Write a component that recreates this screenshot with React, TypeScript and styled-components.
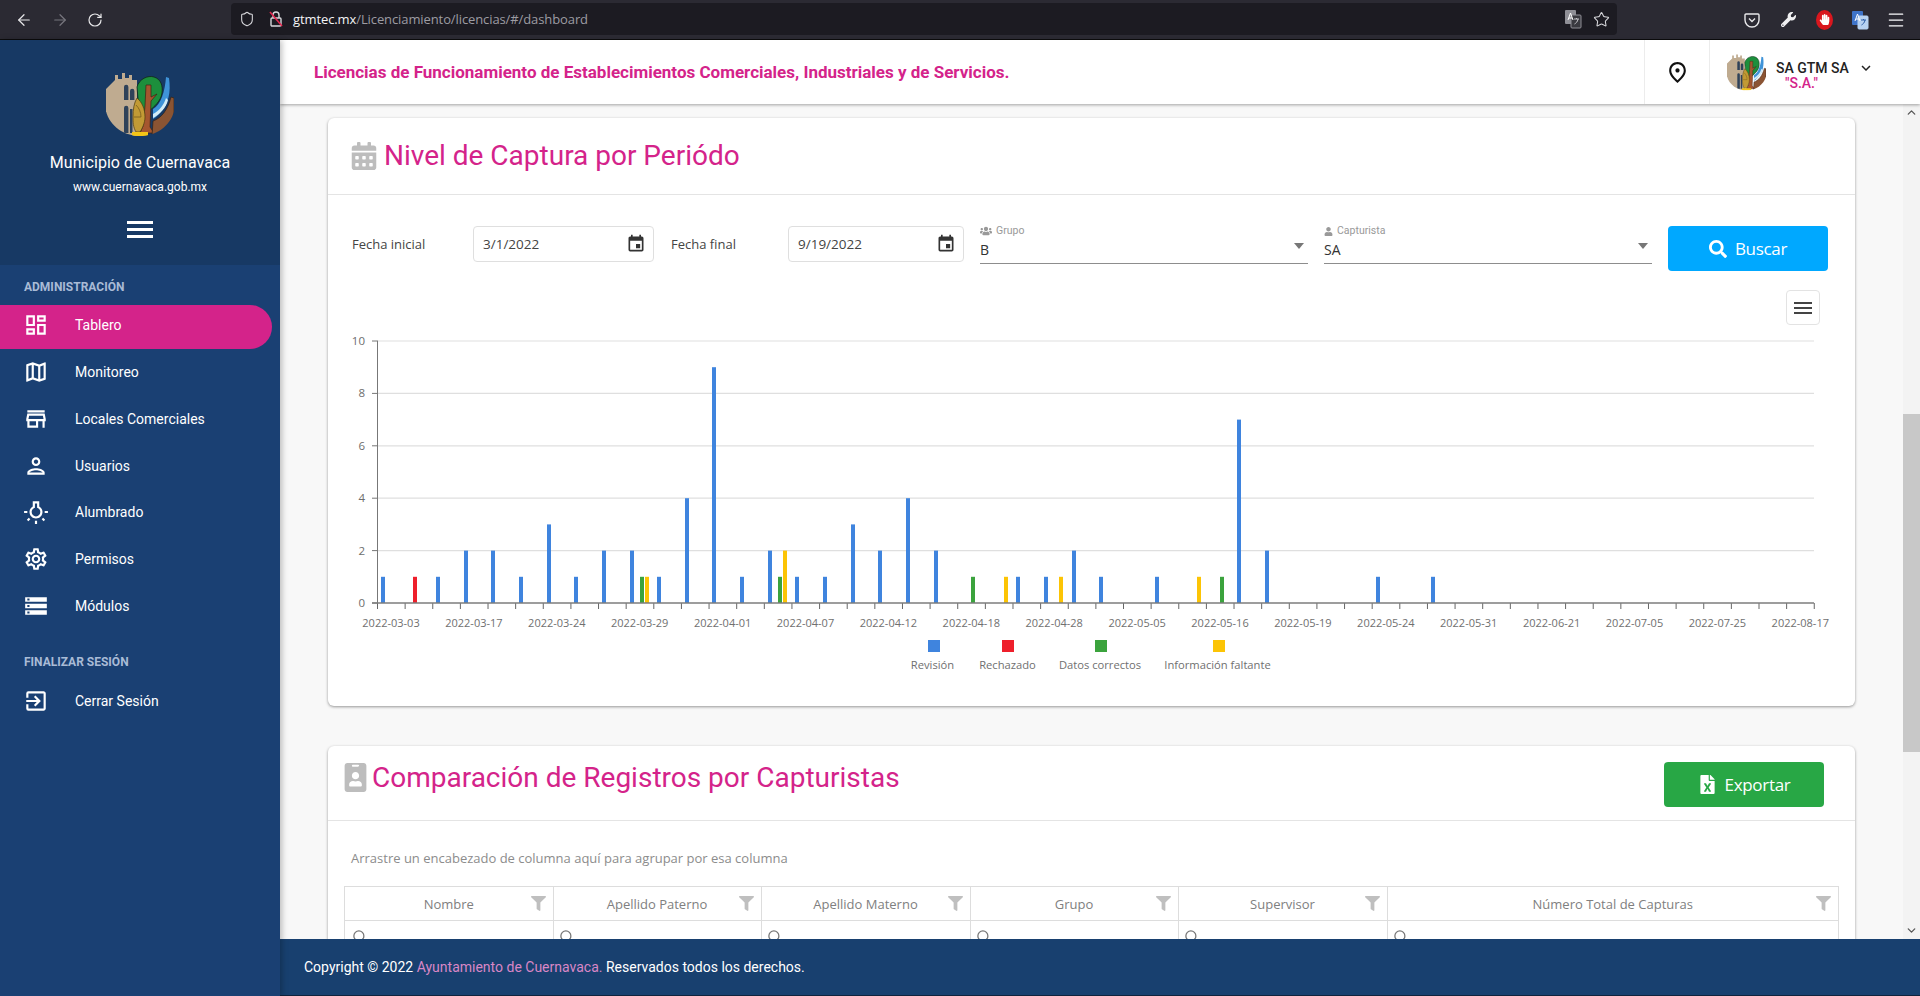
import React from 'react';
import styled, { createGlobalStyle } from 'styled-components';
import { ArrowLeft, ArrowRight, RotateCw, Shield, Star, Menu, Search, ChevronUp, ChevronDown } from 'lucide-react';
import {
  MdOutlineDashboard, MdOutlineMap, MdOutlineStore, MdOutlinePerson, MdOutlineWbIncandescent,
  MdOutlineSettings, MdStorage, MdOutlineExitToApp, MdOutlinePlace, MdKeyboardArrowDown, MdEvent, MdMenu,
} from 'react-icons/md';
import { FaCalendarAlt, FaIdBadge, FaFileExcel, FaSearch, FaUsers, FaUser, FaFilter, FaWrench, FaHandPaper } from 'react-icons/fa';

const PINK = '#d4238a';
const SEGOE = `'Open Sans', 'Noto Sans', sans-serif`;

const Global = createGlobalStyle`
  html, body { margin: 0; padding: 0; height: 996px; overflow: hidden; background: #f8f8f8; }
  body { font-family: Roboto, sans-serif; }
  #root { height: 996px; }
  * { box-sizing: border-box; }
`;

const Page = styled.div`display: flex; flex-direction: column; height: 996px; width: 1920px; overflow: hidden;`;

/* browser chrome */
const BrowserBar = styled.div`
  height: 40px; flex: none; background: #2b2a33; border-bottom: 1px solid #0c0c0d;
  display: flex; align-items: center; color: #fbfbfe;
`;
const NavGroup = styled.div`
  width: 231px; flex: none; display: flex; align-items: center; gap: 18px; padding-left: 15px;
`;
const NavIcon = styled.span<{ $dim?: boolean }>`
  display: flex; color: ${p => (p.$dim ? '#77767e' : '#e8e8ea')};
`;
const AddressBar = styled.div`
  width: 1386px; height: 32px; flex: none; background: #1c1b22; border-radius: 4px; margin-top: -1px;
  display: flex; align-items: center; padding: 0 5px 0 8px; color: #d8d8dc;
`;
const LockGlyph = styled.svg`margin-left: 12px; flex: none;`;
const Url = styled.div`
  font: 400 13px ${SEGOE}; color: #9d9ca3; margin-left: 8px; flex: 1; white-space: nowrap; letter-spacing: -0.1px;
  b { font-weight: 400; color: #f4f4f6; }
`;
const BarIcons = styled.div`display: flex; align-items: center; gap: 11px; margin-right: 2px;`;
const Extensions = styled.div`
  flex: 1; display: flex; align-items: center; justify-content: flex-end; padding-right: 6px;
`;
const ExtSlot = styled.span`width: 36px; flex: none; display: flex; align-items: center; justify-content: center;`;
const RedHand = styled.span`
  width: 17px; height: 20px; border-radius: 50%; background: #d9171e; color: #fff;
  display: flex; align-items: center; justify-content: center;
`;

/* application frame */
const AppBody = styled.div`flex: 1; display: flex; min-height: 0;`;
const Sidebar = styled.aside`
  width: 280px; flex: none; background: #1a4073; color: #fff; display: flex; flex-direction: column;
  box-shadow: 2px 0 6px rgba(0,0,0,.25); z-index: 3;
`;
const Brand = styled.div`
  height: 225px; flex: none; background: #173964; display: flex; flex-direction: column; align-items: center; padding-top: 33px;
`;
const BrandName = styled.div`font-size: 16px; line-height: 20px; margin-top: 17px; letter-spacing: .05px;`;
const BrandUrl = styled.div`font-size: 12px; line-height: 14px; margin-top: 7px;`;
const Burger = styled.div`
  width: 26px; height: 17px; margin-top: 27px;
  border-top: 3px solid #fff; border-bottom: 3px solid #fff; position: relative;
  &::after { content: ''; position: absolute; left: 0; right: 0; top: 4px; height: 3px; background: #fff; }
`;
const SectionTitle = styled.div<{ $top: number }>`
  font-size: 12px; font-weight: 700; line-height: 14px; color: #a9bbd6; padding-left: 24px; margin-top: ${p => p.$top}px;
`;
const NavList = styled.nav<{ $top: number }>`display: flex; flex-direction: column; margin-top: ${p => p.$top}px;`;
const NavRow = styled.a<{ $active?: boolean }>`
  height: 46.7px; width: 272px; display: flex; align-items: center; font-size: 14px; color: #fff;
  ${p => p.$active && `background: ${PINK}; height: 44px; padding-bottom: 4px; border-radius: 0 22px 22px 0;`}
`;
const NavGlyph = styled.span`width: 75px; padding-left: 23px; display: flex; flex: none;`;

const Main = styled.div`flex: 1; display: flex; flex-direction: column; min-width: 0;`;
const Header = styled.header`
  height: 64px; flex: none; background: #fff; display: flex; align-items: stretch;
  box-shadow: 0 1px 3px rgba(0,0,0,.35); z-index: 2;
`;
const HeaderTitle = styled.div`
  flex: 1; display: flex; align-items: center; padding-left: 34px;
  font-size: 17px; font-weight: 700; color: ${PINK};
`;
const PinCell = styled.div`
  width: 65px; flex: none; border-left: 1px solid #ececec; display: flex; align-items: center; justify-content: center; color: #111;
`;
const UserCell = styled.div`
  width: 211px; flex: none; border-left: 1px solid #ececec; display: flex; align-items: center; padding-left: 17px;
`;
const UserText = styled.div`margin-left: 10px; display: flex; flex-direction: column;`;
const UserName = styled.div`font-size: 14px; line-height: 16px; font-weight: 500; color: #222; display: flex; align-items: center; gap: 8px; white-space: nowrap; margin-top: 5px;`;
const UserRole = styled.div`font-size: 14px; line-height: 14px; font-weight: 500; color: ${PINK}; padding-left: 9px; margin-top: -1px;`;

const ScrollArea = styled.div`flex: 1; display: flex; min-height: 0; background: #f8f8f8;`;
const Content = styled.main`
  flex: 1; min-width: 0; overflow: hidden; padding: 14px 48px 0; display: flex; flex-direction: column; gap: 40px;
`;
const ScrollTrack = styled.div`
  width: 17px; flex: none; background: #f3f3f3; display: flex; flex-direction: column; align-items: center; color: #555;
`;
const ScrollArrow = styled.div<{ $gap: number }>`height: 17px; display: flex; align-items: center; margin-top: ${p => p.$gap}px;`;
const ScrollThumb = styled.div`width: 17px; height: 338px; background: #c8c8c8; margin-top: 293px;`;

const Card = styled.section<{ $height: number }>`
  height: ${p => p.$height}px; flex: none; background: #fff; border-radius: 6px;
  box-shadow: 0 1px 3px rgba(0,0,0,.4);
`;
const CardHead = styled.div<{ $h: number }>`
  height: ${p => p.$h}px; border-bottom: 1px solid #e4e4e4; display: flex; align-items: center;
`;
const CardIcon = styled.span<{ $l: number; $w: number }>`
  display: flex; color: #bdbdbd; margin-left: ${p => p.$l}px; width: ${p => p.$w}px; flex: none;
`;
const CardTitle = styled.h2`
  margin: 0; font-size: 28px; font-weight: 400; color: ${PINK}; line-height: 36px;
`;
const FilterRow = styled.div`
  display: flex; align-items: flex-start; padding: 31px 0 0 24px; height: 76px;
`;
const FieldLabel = styled.div<{ $w: number }>`
  width: ${p => p.$w}px; flex: none; font: 400 13px/36px ${SEGOE}; color: #444;
`;
const DateBox = styled.div<{ $w: number; $mr: number }>`
  width: ${p => p.$w}px; margin-right: ${p => p.$mr}px; height: 36px; flex: none; border: 1px solid #dfdfdf; border-radius: 4px;
  display: flex; align-items: center; justify-content: space-between; padding: 0 7px 0 9px; font: 400 13.5px ${SEGOE}; color: #444;
`;
const SelectField = styled.div`
  width: 328px; margin: -1px 16px 0 0; flex: none; height: 39px; border-bottom: 1px solid #8d8d8d; position: relative;
`;
const SelectLabel = styled.div`
  display: flex; align-items: center; gap: 4px; font: 400 10.5px/12px Roboto, sans-serif; color: #999;
`;
const SelectValue = styled.div`font: 400 14px/18px ${SEGOE}; color: #333; margin-top: 4px;`;
const Caret = styled.span`
  position: absolute; right: 4px; top: 18px; width: 0; height: 0;
  border-left: 5px solid transparent; border-right: 5px solid transparent; border-top: 6px solid #777;
`;
const ActionButton = styled.button<{ $bg: string }>`
  width: 160px; height: 45px; flex: none; border: 0; border-radius: 4px; background: ${p => p.$bg}; color: #fff;
  display: flex; align-items: center; justify-content: center; gap: 8px; font: 400 17px ${SEGOE}; letter-spacing: -.3px; padding: 0;
`;
const ChartTools = styled.div`display: flex; justify-content: flex-end; padding: 19px 35px 0 0;`;
const ChartMenu = styled.div`
  width: 34px; height: 35px; border: 1px solid #e3e3e3; border-radius: 4px; display: flex; align-items: center; justify-content: center; color: #444;
`;
const ChartSvg = styled.svg`display: block; width: 1527px; height: 381px;`;
const HeadTitleWrap = styled.div`flex: 1; display: flex; align-items: center; padding-bottom: 11px;`;
const ExportSlot = styled.div`margin-right: 31px; padding-top: 2px;`;
const DropHint = styled.div`font: 400 13px/18px ${SEGOE}; color: #8c8c8c; padding: 28px 0 0 23px; height: 65px;`;
const Grid = styled.div`
  margin: 0 16px; display: grid; grid-template-columns: 208.5px 208px 209px 208px 209px 1fr;
  border: 1px solid #ddd; border-bottom: 0; height: 60px;
`;
const HeadCell = styled.div<{ $last?: boolean }>`
  height: 34px; border-bottom: 1px solid #ddd; border-right: ${p => (p.$last ? '0' : '1px solid #ddd')};
  display: flex; align-items: center; justify-content: center; position: relative;
  font: 400 13px ${SEGOE}; color: #808080; white-space: nowrap;
`;
const FilterGlyph = styled.span`position: absolute; right: 7px; top: 9px; display: flex; color: #bfbfbf;`;
const SearchCell = styled.div<{ $first?: boolean; $last?: boolean }>`
  border-right: ${p => (p.$last ? '0' : '1px solid #ddd')}; padding: 8px 0 0 ${p => (p.$first ? 7 : 5)}px; color: #777;
`;
const Footer = styled.footer`
  height: 57px; flex: none; background: #18406f; border-bottom: 1px solid #10233d; color: #fff; z-index: 2;
  display: flex; align-items: center; padding-left: 24px; font-size: 14px;
  span { color: #d987c6; }
`;

function Logo({ w, h, id }: { w: number; h: number; id: string }) {
  return (
    <svg width={w} height={h} viewBox="0 0 68 63" aria-hidden>
      <defs>
        <clipPath id={id}><path d="M-1 -1H69V30C69 50 52 63 34 63S-1 50 -1 30Z" /></clipPath>
      </defs>
      <g clipPath={`url(#${id})`}>
        <path d="M0 16l9-9V2h3v4h4V0h3v5h4V2h3v5h5v56H0z" fill="#bfab90" />
        <path d="M18 14a2.2 2.2 0 014.4 0V27H18zM24 18a2.2 2.2 0 014.4 0v9H24zM18 35a2.2 2.2 0 014.4 0V60H18zM24 36h2.5v24H24z" fill="#2f4259" />
        <path d="M31 14C33 6 42 2 48 4c7 2 9 9 8 16-1 8-8 14-13 18H33z" fill="#1d8f3c" stroke="#12261a" strokeWidth=".8" />
        <path d="M40 12h5v12l6-3-6 7-1 26 4 6H34l3-7 2-20z" fill="#a5562f" stroke="#3d2415" strokeWidth=".7" />
        <path d="M31 25c5 4 8 11 8 19 0 6-3 12-5 15h-4c-3-5-3-10-3-15 0-8 1-14 4-19z" fill="#c29a35" stroke="#4b3a10" strokeWidth=".7" />
        <path d="M30 32c3 3 5 7 5 12M28 44h7" fill="none" stroke="#6e5518" strokeWidth=".7" />
        <rect x="26" y="59" width="16" height="4" fill="#f4c517" />
        <path d="M60 4l3 1c2 14 0 26-10 36-2 2-4 4-6 5V36c8-4 12-18 13-32z" fill="#3f93d8" />
        <path d="M47 41c6-3 11-9 13-16l2 2c-2 8-8 14-15 18z" fill="#d3ecf7" />
        <path d="M47 48c9-3 15-12 18-24l3 1v20c-4 8-12 14-22 18z" fill="#8a5433" stroke="#2f2218" strokeWidth=".7" />
      </g>
    </svg>
  );
}

function TranslateGlyph({ blue }: { blue?: boolean }) {
  return (
    <svg width="18" height="20" viewBox="0 0 18 20" aria-hidden>
      <rect x="1" y="1" width="11" height="14" rx="1" fill={blue ? '#3f74c9' : '#8f8f96'} />
      <rect x="7" y="6" width="10" height="13" rx="1" fill={blue ? '#b8d3f2' : '#3a3a40'} stroke={blue ? '#b8d3f2' : '#8f8f96'} />
      <path d="M4 11l2.5-7L9 11M5 9h3" fill="none" stroke="#fff" strokeWidth="1" />
      <path d="M10 10h5M12.5 9v1M14 10c-.5 3-2 4-3.5 5" fill="none" stroke={blue ? '#2b5ea8' : '#c5c5ca'} strokeWidth="1" />
    </svg>
  );
}

const BARS: [number, number, string][] = [
  [383,1,'b'],[415,1,'r'],[438,1,'b'],[466,2,'b'],[493,2,'b'],[521,1,'b'],[549,3,'b'],[576,1,'b'],[604,2,'b'],[632,2,'b'],
  [642,1,'g'],[647,1,'y'],[659,1,'b'],[687,4,'b'],[714,9,'b'],[742,1,'b'],[770,2,'b'],[780,1,'g'],[785,2,'y'],[797,1,'b'],
  [825,1,'b'],[853,3,'b'],[880,2,'b'],[908,4,'b'],[936,2,'b'],[973,1,'g'],[1006,1,'y'],[1018,1,'b'],[1046,1,'b'],[1061,1,'y'],
  [1074,2,'b'],[1101,1,'b'],[1157,1,'b'],[1199,1,'y'],[1222,1,'g'],[1239,7,'b'],[1267,2,'b'],[1378,1,'b'],[1433,1,'b'],
];
const COLORS: Record<string, string> = { b: '#3f84de', r: '#ee1f2b', g: '#3ba33d', y: '#fcc405' };
const XLABELS = ['2022-03-03','2022-03-17','2022-03-24','2022-03-29','2022-04-01','2022-04-07','2022-04-12','2022-04-18','2022-04-28','2022-05-05','2022-05-16','2022-05-19','2022-05-24','2022-05-31','2022-06-21','2022-07-05','2022-07-25','2022-08-17'];
const LEGEND = [
  { x: 934, tx: 932.5, c: COLORS.b, t: 'Revisión' },
  { x: 1008, tx: 1007.5, c: COLORS.r, t: 'Rechazado' },
  { x: 1101, tx: 1100, c: COLORS.g, t: 'Datos correctos' },
  { x: 1219, tx: 1217.5, c: COLORS.y, t: 'Información faltante' },
];
const Y0 = 603;
const U = 26.2;

function Chart() {
  const ticks = Array.from({ length: 53 }, (_, i) => 377.5 + 27.63 * i);
  return (
    <ChartSvg viewBox="328 325 1527 381" aria-label="Nivel de captura">
      {[0, 2, 4, 6, 8, 10].map(v => {
        const y = Y0 - v * U;
        return (
          <g key={v}>
            {v > 0 && <line x1="377.5" x2="1814" y1={y} y2={y} stroke="#dfdfdf" strokeWidth="1.2" />}
            <line x1="372" x2="378" y1={y} y2={y} stroke="#777" />
            <text x="365" y={y + 4} textAnchor="end" fontFamily={SEGOE} fontSize="11.5" fill="#6d6d6d">{v}</text>
          </g>
        );
      })}
      <line x1="377.5" x2="377.5" y1={Y0 - 10 * U} y2={Y0} stroke="#777" />
      {ticks.map(x => <line key={x} x1={x} x2={x} y1={Y0} y2={Y0 + 6} stroke="#666" />)}
      {BARS.map(([x, v, c]) => (
        <rect key={`${x}${c}`} x={x - 2} y={Y0 - v * U} width="4" height={v * U} fill={COLORS[c]} />
      ))}
      <line x1="372" x2="1814" y1={Y0} y2={Y0} stroke="#7d7d7d" strokeWidth="1.4" />
      {XLABELS.map((t, i) => (
        <text key={t} x={391 + 82.9 * i} y="627" textAnchor="middle" fontFamily={SEGOE} fontSize="11" fill="#707070">{t}</text>
      ))}
      {LEGEND.map(l => (
        <g key={l.t}>
          <rect x={l.x - 6} y="640" width="12" height="12" fill={l.c} />
          <text x={l.tx} y="669" textAnchor="middle" fontFamily={SEGOE} fontSize="11.2" fill="#707070">{l.t}</text>
        </g>
      ))}
    </ChartSvg>
  );
}

const NAV = [
  { t: 'Tablero', I: MdOutlineDashboard, active: true },
  { t: 'Monitoreo', I: MdOutlineMap },
  { t: 'Locales Comerciales', I: MdOutlineStore },
  { t: 'Usuarios', I: MdOutlinePerson },
  { t: 'Alumbrado', I: MdOutlineWbIncandescent },
  { t: 'Permisos', I: MdOutlineSettings },
  { t: 'Módulos', I: MdStorage },
];
const COLS = ['Nombre', 'Apellido Paterno', 'Apellido Materno', 'Grupo', 'Supervisor', 'Número Total de Capturas'];

export default function App() {
  return (
    <Page>
      <Global />
      <BrowserBar>
        <NavGroup>
          <NavIcon><ArrowLeft size={18} strokeWidth={1.6} /></NavIcon>
          <NavIcon $dim><ArrowRight size={18} strokeWidth={1.6} /></NavIcon>
          <NavIcon><RotateCw size={16} strokeWidth={1.8} /></NavIcon>
        </NavGroup>
        <AddressBar>
          <Shield size={16} strokeWidth={1.6} />
          <LockGlyph width="18" height="18" viewBox="0 0 18 18" aria-hidden>
            <rect x="4" y="8" width="10" height="8" rx="1" fill="none" stroke="#d8d8dc" strokeWidth="1.4" />
            <path d="M6 8V5a3 3 0 016 0v3" fill="none" stroke="#d8d8dc" strokeWidth="1.4" />
            <path d="M3 2l12 14" stroke="#e22850" strokeWidth="1.6" />
          </LockGlyph>
          <Url><b>gtmtec.mx</b>/Licenciamiento/licencias/#/dashboard</Url>
          <BarIcons>
            <TranslateGlyph />
            <Star size={17} strokeWidth={1.5} />
          </BarIcons>
        </AddressBar>
        <Extensions>
          <ExtSlot>
            <svg width="16" height="16" viewBox="0 0 16 16" aria-hidden>
              <path d="M2 2h12a1 1 0 011 1v5a7 7 0 01-14 0V3a1 1 0 011-1z" fill="none" stroke="#e8e8ea" strokeWidth="1.4" />
              <path d="M5 6.5l3 3 3-3" fill="none" stroke="#e8e8ea" strokeWidth="1.4" />
            </svg>
          </ExtSlot>
          <ExtSlot><FaWrench size={15} color="#f0f0f2" /></ExtSlot>
          <ExtSlot><RedHand><FaHandPaper size={11} /></RedHand></ExtSlot>
          <ExtSlot><TranslateGlyph blue /></ExtSlot>
          <ExtSlot><Menu size={20} strokeWidth={1.5} /></ExtSlot>
        </Extensions>
      </BrowserBar>
      <AppBody>
        <Sidebar>
          <Brand>
            <Logo w={68} h={63} id="logo-a" />
            <BrandName>Municipio de Cuernavaca</BrandName>
            <BrandUrl>www.cuernavaca.gob.mx</BrandUrl>
            <Burger />
          </Brand>
          <SectionTitle $top={15}>ADMINISTRACIÓN</SectionTitle>
          <NavList $top={11}>
            {NAV.map(({ t, I, active }) => (
              <NavRow key={t} $active={active}>
                <NavGlyph><I size={26} /></NavGlyph>
                {t}
              </NavRow>
            ))}
          </NavList>
          <SectionTitle $top={26}>FINALIZAR SESIÓN</SectionTitle>
          <NavList $top={9}>
            <NavRow>
              <NavGlyph><MdOutlineExitToApp size={26} /></NavGlyph>
              Cerrar Sesión
            </NavRow>
          </NavList>
        </Sidebar>
        <Main>
          <Header>
            <HeaderTitle>Licencias de Funcionamiento de Establecimientos Comerciales, Industriales y de Servicios.</HeaderTitle>
            <PinCell><MdOutlinePlace size={25} /></PinCell>
            <UserCell>
              <Logo w={39} h={37} id="logo-b" />
              <UserText>
                <UserName>SA GTM SA <MdKeyboardArrowDown size={18} /></UserName>
                <UserRole>"S.A."</UserRole>
              </UserText>
            </UserCell>
          </Header>
          <ScrollArea>
            <Content>
              <Card $height={588}>
                <CardHead $h={77}>
                  <CardIcon $l={22} $w={34}><FaCalendarAlt size={28} /></CardIcon>
                  <CardTitle>Nivel de Captura por Periódo</CardTitle>
                </CardHead>
                <FilterRow>
                  <FieldLabel $w={121}>Fecha inicial</FieldLabel>
                  <DateBox $w={181} $mr={17}>3/1/2022<MdEvent size={20} color="#333" /></DateBox>
                  <FieldLabel $w={117}>Fecha final</FieldLabel>
                  <DateBox $w={176} $mr={16}>9/19/2022<MdEvent size={20} color="#333" /></DateBox>
                  <SelectField>
                    <SelectLabel><FaUsers size={12} />Grupo</SelectLabel>
                    <SelectValue>B</SelectValue>
                    <Caret />
                  </SelectField>
                  <SelectField>
                    <SelectLabel><FaUser size={9} />Capturista</SelectLabel>
                    <SelectValue>SA</SelectValue>
                    <Caret />
                  </SelectField>
                  <ActionButton $bg="#00a8ff"><FaSearch size={18} />Buscar</ActionButton>
                </FilterRow>
                <ChartTools>
                  <ChartMenu><MdMenu size={24} /></ChartMenu>
                </ChartTools>
                <Chart />
              </Card>
              <Card $height={400}>
                <CardHead $h={75}>
                  <HeadTitleWrap>
                    <CardIcon $l={12.5} $w={31.5}><FaIdBadge size={29} /></CardIcon>
                    <CardTitle>Comparación de Registros por Capturistas</CardTitle>
                  </HeadTitleWrap>
                  <ExportSlot>
                    <ActionButton $bg="#28a745"><FaFileExcel size={19} />Exportar</ActionButton>
                  </ExportSlot>
                </CardHead>
                <DropHint>Arrastre un encabezado de columna aquí para agrupar por esa columna</DropHint>
                <Grid>
                  {COLS.map((c, i) => (
                    <HeadCell key={c} $last={i === 5}>
                      {c}
                      <FilterGlyph><FaFilter size={15} /></FilterGlyph>
                    </HeadCell>
                  ))}
                  {COLS.map((c, i) => (
                    <SearchCell key={c} $first={i === 0} $last={i === 5}><Search size={15} strokeWidth={2} /></SearchCell>
                  ))}
                </Grid>
              </Card>
            </Content>
            <ScrollTrack>
              <ScrollArrow $gap={0}><ChevronUp size={13} strokeWidth={2.4} /></ScrollArrow>
              <ScrollThumb />
              <ScrollArrow $gap={170}><ChevronDown size={13} strokeWidth={2.4} /></ScrollArrow>
            </ScrollTrack>
          </ScrollArea>
          <Footer>Copyright © 2022&nbsp;<span>Ayuntamiento de Cuernavaca.</span>&nbsp;Reservados todos los derechos.</Footer>
        </Main>
      </AppBody>
    </Page>
  );
}
